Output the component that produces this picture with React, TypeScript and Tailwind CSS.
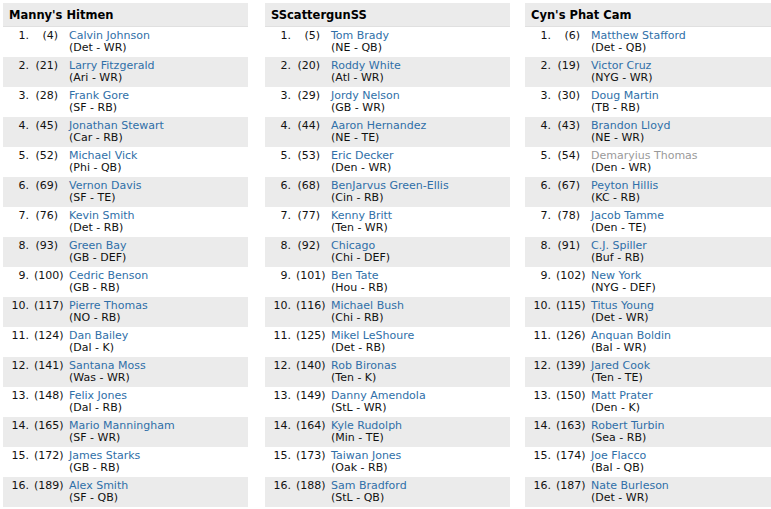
type Pick = { rank: number; pick: number; name: string; team: string; muted?: boolean };
type Team = { owner: string; picks: Pick[] };

const p = (rank: number, pick: number, name: string, team: string, muted = false): Pick => ({ rank, pick, name, team, muted });

const teams: Team[] = [
  {
    owner: "Manny's Hitmen",
    picks: [
      p(1, 4, "Calvin Johnson", "Det - WR"),
      p(2, 21, "Larry Fitzgerald", "Ari - WR"),
      p(3, 28, "Frank Gore", "SF - RB"),
      p(4, 45, "Jonathan Stewart", "Car - RB"),
      p(5, 52, "Michael Vick", "Phi - QB"),
      p(6, 69, "Vernon Davis", "SF - TE"),
      p(7, 76, "Kevin Smith", "Det - RB"),
      p(8, 93, "Green Bay", "GB - DEF"),
      p(9, 100, "Cedric Benson", "GB - RB"),
      p(10, 117, "Pierre Thomas", "NO - RB"),
      p(11, 124, "Dan Bailey", "Dal - K"),
      p(12, 141, "Santana Moss", "Was - WR"),
      p(13, 148, "Felix Jones", "Dal - RB"),
      p(14, 165, "Mario Manningham", "SF - WR"),
      p(15, 172, "James Starks", "GB - RB"),
      p(16, 189, "Alex Smith", "SF - QB"),
    ],
  },
  {
    owner: "SScattergunSS",
    picks: [
      p(1, 5, "Tom Brady", "NE - QB"),
      p(2, 20, "Roddy White", "Atl - WR"),
      p(3, 29, "Jordy Nelson", "GB - WR"),
      p(4, 44, "Aaron Hernandez", "NE - TE"),
      p(5, 53, "Eric Decker", "Den - WR"),
      p(6, 68, "BenJarvus Green-Ellis", "Cin - RB"),
      p(7, 77, "Kenny Britt", "Ten - WR"),
      p(8, 92, "Chicago", "Chi - DEF"),
      p(9, 101, "Ben Tate", "Hou - RB"),
      p(10, 116, "Michael Bush", "Chi - RB"),
      p(11, 125, "Mikel LeShoure", "Det - RB"),
      p(12, 140, "Rob Bironas", "Ten - K"),
      p(13, 149, "Danny Amendola", "StL - WR"),
      p(14, 164, "Kyle Rudolph", "Min - TE"),
      p(15, 173, "Taiwan Jones", "Oak - RB"),
      p(16, 188, "Sam Bradford", "StL - QB"),
    ],
  },
  {
    owner: "Cyn's Phat Cam",
    picks: [
      p(1, 6, "Matthew Stafford", "Det - QB"),
      p(2, 19, "Victor Cruz", "NYG - WR"),
      p(3, 30, "Doug Martin", "TB - RB"),
      p(4, 43, "Brandon Lloyd", "NE - WR"),
      p(5, 54, "Demaryius Thomas", "Den - WR", true),
      p(6, 67, "Peyton Hillis", "KC - RB"),
      p(7, 78, "Jacob Tamme", "Den - TE"),
      p(8, 91, "C.J. Spiller", "Buf - RB"),
      p(9, 102, "New York", "NYG - DEF"),
      p(10, 115, "Titus Young", "Det - WR"),
      p(11, 126, "Anquan Boldin", "Bal - WR"),
      p(12, 139, "Jared Cook", "Ten - TE"),
      p(13, 150, "Matt Prater", "Den - K"),
      p(14, 163, "Robert Turbin", "Sea - RB"),
      p(15, 174, "Joe Flacco", "Bal - QB"),
      p(16, 187, "Nate Burleson", "Det - WR"),
    ],
  },
];

function TeamColumn({ team, className }: { team: Team; className: string }) {
  return (
    <div className={className}>
      {/* Header */}
      <div className="h-[24px] bg-[#ebebeb] border-b border-[#e0e0e0] pl-[6px] pt-[5px] text-[11.5px] leading-[14px] font-bold text-black">
        {team.owner}
      </div>

      {/* Picks */}
      {team.picks.map((pk, i) => (
        <div
          key={pk.rank}
          className={`flex h-[30px] pt-[3px] text-[11px] leading-[12px] text-[#111] ${i % 2 === 1 ? "bg-[#ebebeb]" : "bg-white"}`}
        >
          <span className="w-[26px] shrink-0 text-right">{pk.rank}.</span>
          {/* 3-digit picks overflow to the right, like the original */}
          <span className="ml-[5px] w-[24px] min-w-0 shrink-0 whitespace-nowrap text-right">({pk.pick})</span>
          <div className="ml-[11px] flex flex-col">
            <a href="#" className={pk.muted ? "text-[#9a9a9a]" : "text-[#2f6fa8]"}>
              {pk.name}
            </a>
            <span>({pk.team})</span>
          </div>
        </div>
      ))}
    </div>
  );
}

export default function App() {
  return (
    <div
      className="flex w-[771px] h-[509px] bg-white pt-[3px] pl-[3px]"
      style={{ fontFamily: '"DejaVu Sans", Verdana, sans-serif' }}
    >
      <TeamColumn team={teams[0]} className="w-[245px]" />
      <TeamColumn team={teams[1]} className="w-[245px] ml-[17px]" />
      <TeamColumn team={teams[2]} className="w-[246px] ml-[15px]" />
    </div>
  );
}
